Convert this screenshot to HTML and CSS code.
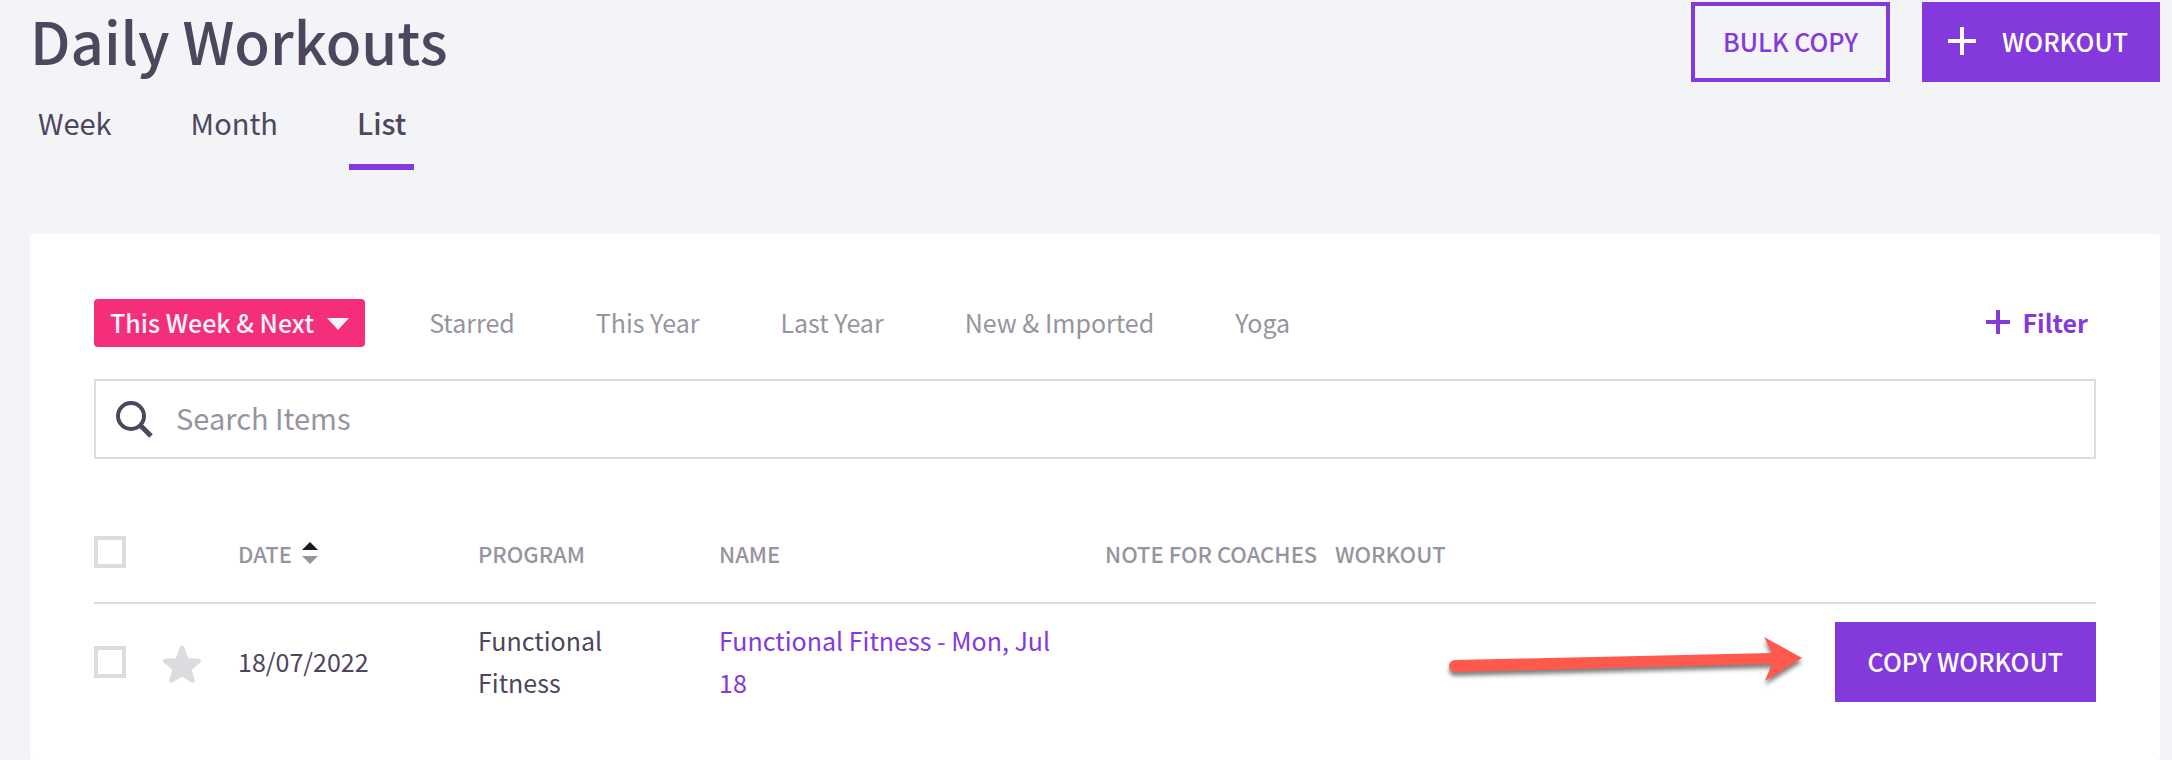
FILE: index.html
```html
<!DOCTYPE html>
<html lang="en">
<head>
    <meta charset="UTF-8">
    <meta name="viewport" content="width=device-width, initial-scale=1.0">
    <title>Daily Workouts</title>
    <link rel="stylesheet" href="styles.css">
</head>
<body>
    <header class="page-header">
        <h1>Daily Workouts</h1>
        <div class="header-actions">
            <button type="button" class="btn btn-outline">BULK COPY</button>
            <button type="button" class="btn btn-icon">
                <svg width="28" height="28" viewBox="0 0 28 28" aria-hidden="true"><path d="M14 0v28M0 14h28" stroke="currentColor" stroke-width="4"/></svg>
                WORKOUT
            </button>
        </div>
    </header>

    <nav class="view-tabs">
        <a href="#week">Week</a>
        <a href="#month">Month</a>
        <a href="#list" class="active">List</a>
    </nav>

    <main class="card">
        <div class="filter-bar">
            <button type="button" class="chip">
                This Week &amp; Next
                <svg width="22" height="12" viewBox="0 0 22 12" aria-hidden="true"><path d="M0 0h22L11 12z" fill="currentColor"/></svg>
            </button>
            <a href="#starred">Starred</a>
            <a href="#this-year">This Year</a>
            <a href="#last-year">Last Year</a>
            <a href="#new">New &amp; Imported</a>
            <a href="#yoga">Yoga</a>
            <button type="button" class="add-filter">
                <svg width="24" height="24" viewBox="0 0 24 24" aria-hidden="true"><path d="M12 0v24M0 12h24" stroke="currentColor" stroke-width="4"/></svg>
                Filter
            </button>
        </div>

        <label class="search">
            <svg width="38" height="38" viewBox="0 0 38 38" fill="none" stroke="currentColor" stroke-width="4" aria-hidden="true"><circle cx="16" cy="16" r="13"/><path d="M25 25l11 11" stroke-width="5"/></svg>
            <input type="search" placeholder="Search Items" aria-label="Search Items">
        </label>

        <table class="workouts">
            <thead>
                <tr>
                    <th class="col-check"><input type="checkbox" aria-label="Select all"></th>
                    <th class="col-star"></th>
                    <th class="col-date">
                        <button type="button" class="sort">
                            DATE
                            <svg width="16" height="22" viewBox="0 0 16 22" aria-hidden="true"><path d="M0 8L8 0l8 8z" fill="#1a1a1f"/><path d="M0 14h16l-8 8z" fill="#9694a0"/></svg>
                        </button>
                    </th>
                    <th class="col-program">PROGRAM</th>
                    <th class="col-name">NAME</th>
                    <th class="col-note">NOTE FOR COACHES</th>
                    <th>WORKOUT</th>
                </tr>
            </thead>
            <tbody>
                <tr>
                    <td><input type="checkbox" aria-label="Select Functional Fitness"></td>
                    <td>
                        <button type="button" class="star" aria-label="Star workout">
                            <svg width="40" height="40" viewBox="0 0 40 40" aria-hidden="true"><path d="M19 3h2l4.500 12L37.500 15.800 38 17.500 28.500 25.500 32 37 30.500 38 20 31.500 9.500 38 8 37 11.500 25.500 2 17.500 2.500 15.800 14.500 15z" fill="currentColor" stroke="currentColor" stroke-width="2" stroke-linejoin="round"/></svg>
                        </button>
                    </td>
                    <td>18/07/2022</td>
                    <td>Functional Fitness</td>
                    <td><a href="#workout">Functional Fitness - Mon, Jul 18</a></td>
                    <td></td>
                    <td>
                        <div class="row-action">
                            <svg class="pointer" width="366" height="60" viewBox="0 0 366 60" aria-hidden="true"><path d="M14 28L331 21 323 5 361 26 324 49 331 32 14 40a6 6 0 0 1 0-12z" fill="#ff594d"/></svg>
                            <button type="button" class="btn">COPY WORKOUT</button>
                        </div>
                    </td>
                </tr>
            </tbody>
        </table>
    </main>
</body>
</html>
```
FILE: styles.css
```css
* {
    box-sizing: border-box;
}

body {
    margin: 0;
    padding: 2px 12px 0 30px;
    min-height: 100vh;
    display: flex;
    flex-direction: column;
    background: #f3f4f8;
    color: #4d465c;
    font-family: "Noto Sans CJK SC", "Noto Sans", sans-serif;
    font-size: 25px;
    line-height: 42px;
}

button,
input {
    font: inherit;
    color: inherit;
}

button {
    padding: 0;
    border: 0;
    background: none;
}

a {
    color: inherit;
    text-decoration: none;
}

svg {
    display: block;
    flex: none;
}

.page-header {
    display: flex;
    justify-content: space-between;
    align-items: flex-start;
}

h1 {
    margin: 0;
    font-size: 58px;
    line-height: 76px;
    font-weight: 500;
}

.header-actions {
    display: flex;
    gap: 32px;
}

.btn {
    height: 80px;
    padding: 0 33px 2px;
    background: #8339dc;
    color: #fff;
    font-weight: 500;
    white-space: nowrap;
}

.btn-outline {
    padding: 0 28px 2px;
    border: 4px solid #8339dc;
    background: none;
    color: #8339dc;
}

.btn-icon {
    display: flex;
    align-items: center;
    gap: 26px;
    padding: 0 32px 2px 26px;
}

.view-tabs {
    display: flex;
    gap: 63px;
    font-size: 29px;
}

.view-tabs a {
    padding: 19px 8px 21px;
    border-bottom: 6px solid transparent;
}

.view-tabs .active {
    border-color: #8339dc;
    font-weight: 500;
}

.card {
    flex: 1;
    margin-top: 64px;
    padding: 65px 64px 40px;
    background: #fff;
    border-radius: 4px;
}

.filter-bar {
    display: flex;
    align-items: center;
    gap: 81px;
    color: #9694a0;
}

.filter-bar a {
    padding-bottom: 2px;
}

.chip {
    display: flex;
    align-items: center;
    gap: 13px;
    height: 48px;
    margin-right: -17px;
    padding: 0 16px 2px;
    border-radius: 4px;
    background: #f52e7c;
    color: #f3f4f8;
    font-weight: 500;
}

.chip svg {
    margin-top: 4px;
}

.add-filter {
    display: flex;
    align-items: center;
    gap: 12px;
    margin-left: auto;
    padding: 0 8px 2px 0;
    color: #8339dc;
    font-weight: 700;
}

.search {
    display: flex;
    align-items: center;
    gap: 23px;
    height: 80px;
    margin-top: 32px;
    padding: 0 19px;
    border: 2px solid #dcdbe0;
}

.search input {
    flex: 1;
    padding: 0 0 4px;
    border: 0;
    outline: 0;
    background: none;
    font-size: 29px;
}

.search input::placeholder {
    color: #9694a0;
    opacity: 1;
}

.workouts {
    width: 100%;
    margin-top: 54px;
    table-layout: fixed;
    border-collapse: collapse;
}

.workouts th {
    height: 90px;
    padding: 0 0 10px;
    border-bottom: 2px solid #dcdbe0;
    color: #9694a0;
    font-size: 22px;
    font-weight: 500;
    text-align: left;
    white-space: nowrap;
}

.workouts .col-check {
    width: 68px;
    padding-bottom: 12px;
}

.workouts td {
    padding: 15px 32px 17px 0;
}

.workouts td:first-child,
.workouts td:nth-child(2),
.workouts td:last-child {
    padding: 16px 0;
}

.workouts td a {
    color: #8339dc;
}

.col-star {
    width: 76px;
}

.col-date {
    width: 240px;
}

.col-program {
    width: 241px;
}

.col-name {
    width: 386px;
}

.col-note {
    width: 230px;
}

.workouts input {
    appearance: none;
    display: block;
    width: 32px;
    height: 32px;
    margin: 0;
    border: 4px solid #dcdbe0;
}

.sort {
    display: flex;
    align-items: center;
    gap: 10px;
}

.star {
    display: block;
    padding-top: 4px;
    color: #dcdbe0;
}

.row-action {
    display: flex;
    justify-content: flex-end;
    align-items: center;
    gap: 28px;
}

.pointer {
    filter: drop-shadow(0 4px 2px rgba(0, 0, 0, 0.5));
}
```
